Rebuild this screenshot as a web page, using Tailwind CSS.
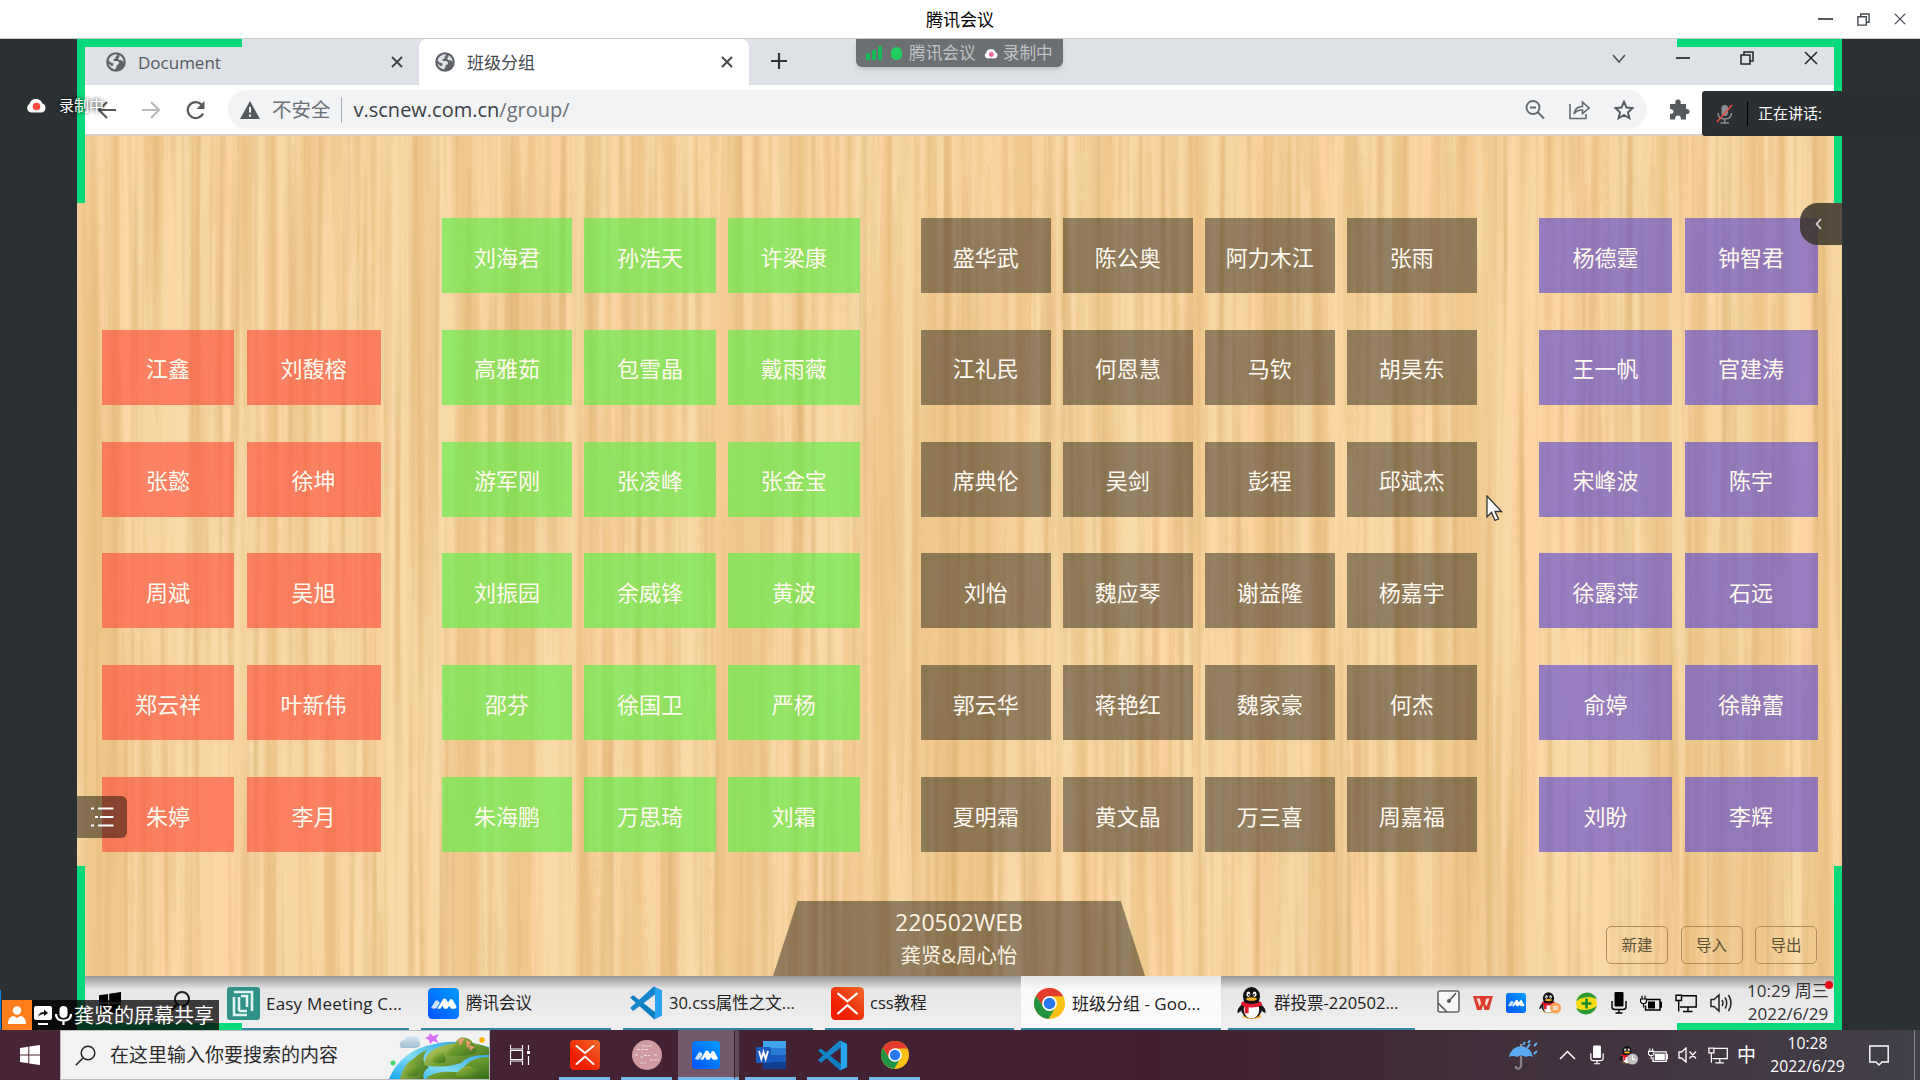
<!DOCTYPE html>
<html lang="zh-CN">
<head>
<meta charset="utf-8">
<title>腾讯会议</title>
<script src="https://cdn.jsdelivr.net/npm/@tailwindcss/browser@4"></script>
</head>
<body class="h-screen w-screen overflow-hidden bg-[#2b3033] font-['Open_Sans','Noto_Sans_CJK_SC',sans-serif] leading-none whitespace-nowrap text-[#222]">
<!-- shared icons -->
<svg class="absolute size-0">
  <defs>
    <linearGradient id="gBlue" x1="0" y1="1" x2="1" y2="0"><stop offset="0" stop-color="#0052ff"/><stop offset="1" stop-color="#009dff"/></linearGradient>
    <linearGradient id="gRed" x1="0" y1="1" x2="1" y2="0"><stop offset=".3" stop-color="#f01f00"/><stop offset="1" stop-color="#f0692b"/></linearGradient>
    <linearGradient id="gHill" x1="0" y1="0" x2="1" y2="1"><stop offset="0" stop-color="#b5bf4e"/><stop offset=".5" stop-color="#6c9a2c"/><stop offset="1" stop-color="#356d1c"/></linearGradient>
    <linearGradient id="gLand" x1="0" y1="0" x2="1" y2=".6"><stop offset="0" stop-color="#d3d873"/><stop offset=".5" stop-color="#7da53a"/><stop offset="1" stop-color="#4a7a22"/></linearGradient>
    <linearGradient id="gWater" x1="0" y1="1" x2="1" y2="0"><stop offset="0" stop-color="#18a5f0"/><stop offset=".4" stop-color="#7fdcf2"/><stop offset="1" stop-color="#1b9bea"/></linearGradient>
    <linearGradient id="gCloud" x1="0" y1="0" x2="0" y2="1"><stop offset="0" stop-color="#dbe8f0"/><stop offset="1" stop-color="#9dbdd2"/></linearGradient>
  </defs>
  <symbol id="globe" viewBox="0 0 20 20"><circle cx="10" cy="10" r="9.8" fill="#5f6368"/><path d="M2.6 8.4C3.4 5 6 2.7 9.4 2.3L11.5 3 9.6 4.8 9.8 6.2 7.6 7.3 7.8 9H11.6L13.2 10.6 12.4 12.4 10.6 13.2 10.4 15.6 8.8 17.4C5.8 16.8 3 14.4 2.5 11.6L5.6 14 7.4 13.6 7.2 11.2 4.6 10.6Z" fill="#dee1e6"/><path d="M13.6 3.2C16 4.5 17.6 7 17.6 10L15.4 8.2 13 8 12 6.2 13.4 5Z" fill="#dee1e6"/></symbol>
  <symbol id="x" viewBox="0 0 12 12"><path d="M1 1L11 11M11 1L1 11" fill="none" stroke="currentColor" stroke-width="1.9"/></symbol>
  <symbol id="xthin" viewBox="0 0 14 14"><path d="M1 1L13 13M13 1L1 13" fill="none" stroke="currentColor" stroke-width="1.5"/></symbol>
  <symbol id="restore" viewBox="0 0 14 14"><path d="M1 4H10V13H1ZM4 4V1H13V10H10" fill="none" stroke="currentColor" stroke-width="1.5"/></symbol>
  <symbol id="rec" viewBox="0 0 20 15"><path d="M5 14.5A4.6 4.6 0 0 1 3.4 6 6.8 6.8 0 0 1 16.4 5.6 4.6 4.6 0 0 1 15.4 14.5Z" fill="#fff"/></symbol>
  <symbol id="tm" viewBox="0 0 30 30"><rect width="30" height="30" rx="4" fill="url(#gBlue)"/><path d="M3 19L7 12.5Q8.5 11 10 12.5L11.5 14.5 8.5 19Q6 21 3 19Z" fill="#fff" opacity=".8"/><path d="M9 20L14.5 11Q16 9.5 17.5 11L19.5 14 21.5 11Q23 10 24 11.5L27.5 18Q28 20 26 20H22.5L20.5 17.5 18.5 20H15.5L14 17 12 20Z" fill="#fff"/></symbol>
  <symbol id="vs" viewBox="0 0 34 34"><path d="M1 11.5L4.2 9.2 26 26V33.5Q25 33.2 24 32.3Z" fill="#0a7fc4"/><path d="M1 22L24.2 1 26 .5V8.5L4.2 25Z" fill="#1686cc"/><path d="M25 .5L33 4.2V29.8L25 33.5Q26 32 26 30V4Q26 2 25 .5Z" fill="#25a4ef"/></symbol>
  <symbol id="xm" viewBox="0 0 30 30"><rect width="30" height="30" rx="4" fill="url(#gRed)"/><path d="M6.5 6L15 13 23.5 6M6.5 24L15 16.5 23.5 24" fill="none" stroke="#fff" stroke-width="2" stroke-linecap="round"/></symbol>
  <symbol id="chrome" viewBox="0 0 30 30"><circle cx="15" cy="15" r="15" fill="#fbc116"/><path d="M15 15V8H28.2A15 15 0 0 0 2 7.5L9 18.5Z" fill="#e33b2e"/><path d="M2 7.5A15 15 0 0 0 14 30L21 18.5 15 22 9 18.5Z" fill="#229342"/><circle cx="15" cy="15" r="7.2" fill="#fff"/><circle cx="15" cy="15" r="5.6" fill="#2a78f0"/></symbol>
  <symbol id="qq" viewBox="0 0 30 34"><path d="M6 31Q15 35 25 31L24 28H7Z" fill="#f5a81c"/><path d="M5 18Q0 22 .5 27L4 25ZM25 18Q30 22 29.5 27L26 25Z" fill="#111"/><ellipse cx="15" cy="22" rx="11" ry="10.5" fill="#111"/><ellipse cx="15" cy="23.5" rx="8" ry="9" fill="#fff"/><ellipse cx="15" cy="9.5" rx="8.8" ry="9.5" fill="#111"/><ellipse cx="11.8" cy="7.5" rx="2" ry="2.8" fill="#fff"/><ellipse cx="18.2" cy="7.5" rx="2" ry="2.8" fill="#fff"/><circle cx="12.3" cy="8" r="1" fill="#111"/><circle cx="17.7" cy="8" r="1" fill="#111"/><ellipse cx="15" cy="12.3" rx="5.5" ry="1.8" fill="#f7b21e"/><path d="M5 15Q15 20 25 15L26 19Q20 21.5 12 21V27H8V20L4 18.5Z" fill="#e5152a"/></symbol>
  <symbol id="mic" viewBox="0 0 16 22"><rect x="3.5" y="0" width="9" height="14.5" rx="1" fill="currentColor"/><path d="M1 9V15Q1 17.5 4 17.5H12Q15 17.5 15 15V9M8 18V21M4.5 21H11.5" fill="none" stroke="currentColor" stroke-width="1.4"/></symbol>
  <symbol id="bat" viewBox="0 0 22 16"><path d="M7 4H20V14.5H5.5V10M20 7H21.5V11.5H20" fill="none" stroke="currentColor" stroke-width="1.5"/><path d="M2 0V3M5 0V3M.5 3.5H6.5V6.5L5 8H2L.5 6.5ZM3.5 8V12" fill="none" stroke="currentColor" stroke-width="1.2"/></symbol>
  <symbol id="net" viewBox="0 0 22 18"><path d="M6.5 1.2H21.2V12.5H5M13 12.5V17M8 17H17.5M1 .8H6.5V6H1ZM3.7 6V17" fill="none" stroke="currentColor" stroke-width="1.4"/></symbol>
  <symbol id="win" viewBox="0 0 20 20"><path d="M0 3L8.3 1.8V9.5H0ZM9.3 1.6L20 0V9.5H9.3ZM0 10.5H8.3V18.2L0 17ZM9.3 10.5H20V20L9.3 18.4Z" fill="currentColor"/></symbol>
</svg>

<div class="flex h-full flex-col">
  <!-- window title bar -->
  <header class="relative flex h-[39px] shrink-0 items-center justify-end border-b border-[#c3cbcd] bg-white">
    <h1 class="absolute inset-x-0 top-[11px] text-center text-[17px] text-black">腾讯会议</h1>
    <div class="mr-[14px] flex items-center gap-[24px] text-[#444a50]">
      <span class="h-[1.5px] w-[15px] bg-[#555a5e]"></span>
      <svg class="size-[13px]"><use href="#restore"/></svg>
      <svg class="size-[12px]"><use href="#xthin"/></svg>
    </div>
  </header>

  <!-- shared screen -->
  <main class="relative flex h-[991px] shrink-0 pl-[77px]">
    <section class="flex w-[1765px] shrink-0 flex-col overflow-hidden">
      <!-- tab strip -->
      <div class="flex h-[46px] shrink-0 bg-[#dee1e6]">
        <div class="flex w-[342px] items-center pl-[29px]">
          <svg class="size-[20px]"><use href="#globe"/></svg>
          <span class="ml-[12px] text-[17px] text-[#55595e]">Document</span>
          <svg class="ml-auto mr-[16px] size-[12px] text-[#444]"><use href="#x"/></svg>
        </div>
        <div class="flex w-[330px] items-center rounded-t-lg bg-white pl-[16px]">
          <svg class="size-[20px]"><use href="#globe"/></svg>
          <span class="ml-[12px] text-[17px] text-[#45494d]">班级分组</span>
          <svg class="ml-auto mr-[16px] size-[12px] text-[#444]"><use href="#x"/></svg>
        </div>
        <svg class="ml-[21px] mt-[13px] size-[18px]" viewBox="0 0 18 18"><path d="M9 1V17M1 9H17" stroke="#333" stroke-width="2.2"/></svg>
        <div class="ml-auto mr-[24px] flex h-[38px] items-center gap-[50px] text-[#222]">
          <svg class="h-[9px] w-[14px]" viewBox="0 0 14 9"><path d="M1 1L7 8 13 1" fill="none" stroke="#555" stroke-width="1.7"/></svg>
          <span class="h-[2px] w-[14px] bg-[#444]"></span>
          <svg class="size-[14px]"><use href="#restore"/></svg>
          <svg class="size-[14px]"><use href="#xthin"/></svg>
        </div>
      </div>
      <!-- address bar -->
      <div class="flex h-[51px] shrink-0 items-center border-b-2 border-[#dccfc0] bg-white pl-[20px]">
        <svg class="h-[20px] w-[20px]" viewBox="0 0 20 20"><path d="M19 10H2M10 2L2 10 10 18" fill="none" stroke="#555a5e" stroke-width="2.2"/></svg>
        <svg class="ml-[24px] h-[20px] w-[20px]" viewBox="0 0 20 20"><path d="M1 10H18M10 2L18 10 10 18" fill="none" stroke="#b8babd" stroke-width="2.2"/></svg>
        <svg class="ml-[24px] h-[20px] w-[21px]" viewBox="0 0 21 20"><path d="M18 13.5A8 8 0 1 1 16.5 4.5" fill="none" stroke="#555a5e" stroke-width="2.3"/><path d="M19.5 1V9H11.5Z" fill="#555a5e"/></svg>
        <div class="ml-[22px] flex h-[39px] w-[1419px] items-center rounded-full bg-[#f1f3f4] pl-[12px]">
          <svg class="h-[18px] w-[20px]" viewBox="0 0 20 18"><path d="M10 0L20 18H0Z" fill="#55595e"/><path d="M10 6V11.5M10 13.5V15.8" stroke="#f1f3f4" stroke-width="2"/></svg>
          <span class="ml-[12px] text-[19.5px] text-[#6c7074]">不安全</span>
          <span class="ml-[10px] h-[26px] w-px bg-[#a9acb0]"></span>
          <span class="ml-[12px] text-[20px] text-[#3c4044]">v.scnew.com.cn<span class="text-[#6c7074]">/group/</span></span>
          <div class="ml-auto mr-[13px] flex items-center gap-[24px]">
            <svg class="h-[20px] w-[20px]" viewBox="0 0 20 20"><circle cx="8" cy="7.5" r="6.5" fill="none" stroke="#666a6e" stroke-width="1.9"/><path d="M5 7.5H11M12.5 12L19 18.5" stroke="#666a6e" stroke-width="2"/></svg>
            <svg class="h-[20px] w-[21px]" viewBox="0 0 21 20"><path d="M1 4V18.5H17V14M5 14Q6 6.5 13.5 6.500V2L20 8 13.500 13.500V10Q8 9.500 5 14Z" fill="none" stroke="#666a6e" stroke-width="1.6"/></svg>
            <svg class="h-[20px] w-[20px]" viewBox="0 0 20 20"><path d="M10 1.800L12.500 7.500 18.500 8 14 12.200 15.400 18.200 10 15 4.600 18.200 6 12.200 1.500 8 7.500 7.500Z" fill="none" stroke="#55595e" stroke-width="1.900"/></svg>
          </div>
        </div>
        <svg class="ml-[22px] h-[21px] w-[21px]" viewBox="0 0 21 21"><path d="M1 5H6.500Q5.500 .5 9 .5T11.500 5H17V10Q20.500 9.500 20.500 12.500T17 15V20.500H12Q12 16.500 9 16.500T6 20.500H1V15Q4.500 15 4.500 12.500T1 10Z" fill="#55595e"/></svg>
      </div>

      <!-- seating page -->
      <div class="relative h-[840px] shrink-0 overflow-hidden bg-[#f5d3a0]">
        <svg class="absolute inset-0 h-full w-full" preserveAspectRatio="none">
          <filter id="planks" x="0" y="0" width="100%" height="100%" color-interpolation-filters="sRGB"><feTurbulence type="fractalNoise" baseFrequency="0.045 0.0007" numOctaves="2" seed="8"/><feColorMatrix values="0 0 0 0 .91  0 0 0 0 .745  0 0 0 0 .49  2.500 0 0 0 -.75"/><feComponentTransfer><feFuncA type="discrete" tableValues="0 0 .08 .2 .12 .35 .45 .55 .65"/></feComponentTransfer></filter>
          <filter id="grain" x="0" y="0" width="100%" height="100%" color-interpolation-filters="sRGB"><feTurbulence type="fractalNoise" baseFrequency="0.12 0.002" numOctaves="2" seed="21"/><feColorMatrix values="0 0 0 0 .86  0 0 0 0 .69  0 0 0 0 .44  0 1.800 0 0 -.82"/></filter>
          <filter id="sheen" x="0" y="0" width="100%" height="100%" color-interpolation-filters="sRGB"><feTurbulence type="fractalNoise" baseFrequency="0.03 0.0015" numOctaves="2" seed="4"/><feColorMatrix values="0 0 0 0 1  0 0 0 0 .83  0 0 0 0 .64  0 0 2 0 -.85"/></filter>
          <rect width="100%" height="100%" fill="#f8d9a8"/>
          <rect width="100%" height="100%" filter="url(#sheen)"/>
          <rect width="100%" height="100%" filter="url(#planks)"/>
          <rect width="100%" height="100%" filter="url(#grain)"/>
        </svg>
        <div id="groups" class="relative flex h-[716px] items-end pl-[25px] text-[22px] text-[#fffaf0]"></div>
        <div class="relative flex h-[124px] items-end">
          <div class="ml-[696px] flex h-[75px] w-[372px] flex-col items-center bg-black/40 pt-[10px] text-[#fdf3e2] [clip-path:polygon(6.6%_0,93.500%_0,100%_100%,0_100%)]">
            <span class="text-[23px]">220502WEB</span>
            <span class="mt-[11px] text-[20.400px]">龚贤&amp;周心怡</span>
          </div>
          <div class="mb-[12px] ml-auto mr-[25px] flex gap-[12.500px] text-[15.500px] text-[#5f5038]">
            <span class="flex h-[38px] w-[62px] items-center justify-center rounded-[5px] border-[1.500px] border-[#b08c5c] pt-[2px]">新建</span>
            <span class="flex h-[38px] w-[62px] items-center justify-center rounded-[5px] border-[1.500px] border-[#b08c5c] pt-[2px]">导入</span>
            <span class="flex h-[38px] w-[62px] items-center justify-center rounded-[5px] border-[1.500px] border-[#b08c5c] pt-[2px]">导出</span>
          </div>
        </div>
      </div>

      <!-- presenter's taskbar -->
      <div class="flex h-[54px] shrink-0 bg-linear-to-b from-[#999] via-[#e6e6e6] via-25% to-[#f0f0f1] text-[16.500px] text-[#222]">
        <svg class="ml-[22px] mt-[16px] size-[22px] text-black"><use href="#win"/></svg>
        <svg class="ml-[50px] mt-[15px] size-[20px]" viewBox="0 0 20 20"><circle cx="11" cy="8" r="7" fill="none" stroke="#222" stroke-width="2"/><path d="M6 13L1 19" stroke="#222" stroke-width="2"/></svg>
        <div class="ml-[22px] flex w-[196px] items-center border-b-2 border-[#2f86a6] pl-[14px] pt-[2px]">
          <svg class="size-[33px]" viewBox="0 0 33 33"><rect width="33" height="33" rx="3" fill="#2f9187"/><path d="M7 5H25V24M20 28H7V10M12 24V10M12 24H20M14 9H20V20" fill="none" stroke="#dff3f0" stroke-width="2.600"/></svg>
          <span class="ml-[6px] text-[17px] tracking-[.2px]">Easy Meeting C...</span>
        </div>
        <div class="ml-[12px] flex w-[190px] items-center border-b-2 border-[#2f86a6] pl-[7px] pt-[2px]">
          <svg class="size-[31px]"><use href="#tm"/></svg><span class="ml-[7px]">腾讯会议</span>
        </div>
        <div class="ml-[12px] flex w-[190px] items-center border-b-2 border-[#2f86a6] pl-[6px] pt-[2px]">
          <svg class="size-[34px]"><use href="#vs"/></svg><span class="ml-[6px]">30.css属性之文...</span>
        </div>
        <div class="ml-[12px] flex w-[189px] items-center border-b-2 border-[#2f86a6] pl-[6px] pt-[2px]">
          <svg class="size-[33px]"><use href="#xm"/></svg><span class="ml-[6px]">css教程</span>
        </div>
        <div class="ml-[7px] flex w-[200px] items-center border-b-2 border-[#2f86a6] bg-white/75 pl-[13px] pt-[2px]">
          <svg class="size-[31px]"><use href="#chrome"/></svg><span class="ml-[7px] text-[17px]">班级分组 - Goo...</span>
        </div>
        <div class="ml-[7px] flex w-[187px] items-center border-b-2 border-[#2f86a6] pl-[9px] pt-[2px]">
          <svg class="h-[33px] w-[29px]"><use href="#qq"/></svg><span class="ml-[8px]">群投票-220502...</span>
        </div>
        <div class="ml-[22px] mt-[15px] flex h-[24px] w-[296px] shrink-0 items-center justify-between text-black">
          <svg class="mb-[4px] size-[23px]" viewBox="0 0 23 23"><rect x="1" y="1" width="21" height="21" rx="2" fill="#f8f8f8" stroke="#666" stroke-width="1.600"/><path d="M1 13L10 22M12 11L19 3" stroke="#555" stroke-width="1.600"/><circle cx="12" cy="11" r="2" fill="#555"/></svg>
          <svg class="h-[16px] w-[20px]" viewBox="0 0 20 16"><path d="M0 1H20L16 15H11.500L10 10 8.500 15H4Z" fill="#dc3b2c"/><path d="M3.500 3.500H7L8 9 6.500 11.500ZM16.500 3.500H13L12 9 13.500 11.500Z" fill="#f4dcd8"/></svg>
          <svg class="size-[20px]"><use href="#tm"/></svg>
          <svg class="h-[23px] w-[22px]" viewBox="0 0 22 23"><use href="#qq" width="19" height="22"/><circle cx="16.500" cy="16" r="5.500" fill="#f9a45a"/><path d="M14 14.800H19M14 17.200H19" stroke="#fff" stroke-width="1.200"/></svg>
          <svg class="size-[23px]" viewBox="0 0 23 23"><circle cx="11.500" cy="11.500" r="10.500" fill="#fbdc12"/><path d="M1 9Q4 1 12 .5 19 1 22 7 12 2 1 9ZM22 14Q19 22 11 22.500 4 22 1 16 11 21 22 14Z" fill="#2c9a38"/><path d="M11.500 6.500V16.500M6.500 11.500H16.500" stroke="#178a2c" stroke-width="2.600"/></svg>
          <svg class="h-[22px] w-[16px]"><use href="#mic"/></svg>
          <svg class="h-[17px] w-[22px]" viewBox="0 0 22 16"><use href="#bat"/><rect x="8" y="6" width="7" height="7"/></svg>
          <svg class="h-[19px] w-[22px]"><use href="#net"/></svg>
          <svg class="h-[20px] w-[23px]" viewBox="0 0 23 20"><path d="M1 6.500H4L9 2V18L4 13.500H1ZM12 7Q14 10 12 13M15 4.500Q18.500 10 15 15.500M18.500 2Q23.500 10 18.500 18" fill="none" stroke="#222" stroke-width="1.500"/></svg>
        </div>
        <div class="ml-[14px] flex w-[82px] shrink-0 flex-col items-center gap-[6px] pt-[6px] text-[17px] text-[#333]">
          <span>10:29 周三</span><span>2022/6/29</span>
        </div>
      </div>
    </section>

    <!-- share-border corners -->
    <div class="pointer-events-none absolute top-0 left-[77px] h-[164px] w-[8px] bg-[#08d97b]"></div>
    <div class="absolute top-0 left-[77px] h-[8px] w-[165px] bg-[#08d97b]"></div>
    <div class="absolute top-0 left-[1677px] h-[8px] w-[165px] bg-[#08d97b]"></div>
    <div class="absolute top-0 left-[1834px] h-[164px] w-[8px] bg-[#08d97b]"></div>
    <div class="absolute bottom-0 left-[77px] h-[164px] w-[8px] bg-[#08d97b]"></div>
    <div class="absolute bottom-0 left-[77px] h-[7px] w-[165px] bg-[#08d97b]"></div>
    <div class="absolute bottom-0 left-[1834px] h-[164px] w-[8px] bg-[#08d97b]"></div>
    <div class="absolute bottom-0 left-[1677px] h-[7px] w-[165px] bg-[#08d97b]"></div>
    <div class="absolute top-[942px] left-[1825px] size-[8px] rounded-full bg-[#e30b14]"></div>

    <!-- floating meeting status -->
    <div class="absolute top-0 left-[856px] flex h-[28px] w-[207px] items-center rounded-b-md bg-[#6c7072] pl-[10px] text-[16.700px] text-[#bfc1c2] shadow-md">
      <svg class="h-[14px] w-[16px]" viewBox="0 0 16 14"><path d="M0 7H4V14H0ZM6 4H10V14H6ZM12 0H16V14H12Z" fill="#18b858"/></svg>
      <span class="ml-[9px] h-[13px] w-[11px] rounded-full bg-[#1fce5c]"></span>
      <span class="ml-[7px]">腾讯会议</span>
      <svg class="ml-[8px] h-[11px] w-[14px]" viewBox="0 0 20 15"><use href="#rec"/><circle cx="10.500" cy="9" r="3.500" fill="#f0609a"/></svg>
      <span class="ml-[5px]">录制中</span>
    </div>

    <!-- recording label -->
    <div class="absolute top-[57px] left-[26px] flex h-[18px] items-center text-[15px] text-white [text-shadow:0_0_4px_#000]">
      <svg class="h-[15px] w-[20px]" viewBox="0 0 20 15"><use href="#rec"/><circle cx="10.500" cy="8.500" r="3.800" fill="#ff4a3d"/></svg>
      <span class="ml-[13px]">录制中</span>
    </div>

    <!-- speaking bar -->
    <div class="absolute top-[52px] left-[1702px] flex h-[45px] w-[218px] items-center rounded-l-[3px] bg-[#2b2f32] pl-[14px] text-[15px] text-white">
      <svg class="h-[20px] w-[17px]" viewBox="0 0 17 20"><rect x="5.500" y="1" width="6.500" height="11" rx="3.200" fill="#8b8f92"/><path d="M2 9Q2 15 8.700 15T15.500 9M8.700 15V19M4.500 19H13" fill="none" stroke="#8b8f92" stroke-width="1.500"/><path d="M1 18L16 1" stroke="#ee4a40" stroke-width="1.600"/></svg>
      <span class="ml-[14px] h-[25px] w-px bg-black"></span>
      <span class="ml-[10px]">正在讲话:</span>
    </div>

    <!-- edge handles -->
    <div class="absolute top-[164px] left-[1800px] flex h-[42px] w-[42px] items-center justify-center rounded-l-[18px] bg-[#3b342c]/85 pr-[5px]">
      <svg class="h-[12px] w-[7px]" viewBox="0 0 7 12"><path d="M6 1L1.500 6 6 11" fill="none" stroke="#ddd" stroke-width="1.600"/></svg>
    </div>
    <div class="absolute top-[757px] left-[77px] flex h-[42px] w-[50px] items-center rounded-r-md bg-black/45 pl-[14px]">
      <svg class="h-[20px] w-[23px]" viewBox="0 0 23 20"><path d="M7 1.500H22.500M9 10H22.500M7 18.500H22.500M0 1.500H3M4 10H7M0 18.500H3" stroke="#fff" stroke-width="2.200"/></svg>
    </div>

    <!-- sharing label -->
    <div class="absolute bottom-0 left-0 h-[40px] w-px bg-[#0a84e0]"></div>
    <div class="absolute bottom-0 left-[2px] flex h-[30px] w-[217px] items-center bg-black/75 text-[20px] text-white">
      <span class="flex h-full w-[30px] items-end justify-center bg-[#ff7e1b] pb-[6px]"><svg class="h-[18px] w-[18px]" viewBox="0 0 18 18"><circle cx="9" cy="4.500" r="4.200" fill="#fff"/><path d="M0 18Q0 10.500 6 10L9 12 12 10Q18 10.500 18 18Z" fill="#fff"/></svg></span>
      <svg class="ml-[2px] h-[19px] w-[18px]" viewBox="0 0 18 19"><rect y="0" width="18" height="14" rx="2" fill="#fff"/><path d="M4 11Q5 6 10 6V3.500L14 7 10 10V8Q6 8 4 11Z" fill="#111"/><path d="M4 18H14" stroke="#fff" stroke-width="2"/></svg>
      <svg class="ml-[3px] h-[19px] w-[17px]" viewBox="0 0 17 19"><rect x="4.500" y="0" width="8" height="12" rx="4" fill="#fff"/><path d="M1 8Q1 14.500 8.500 14.500T16 8M8.500 14.500V19" fill="none" stroke="#fff" stroke-width="2.200"/></svg>
      <span class="ml-[2px] pt-[2px]">龚贤的屏幕共享</span>
    </div>

    <!-- mouse pointer -->
    <svg class="absolute top-[456px] left-[1486px] h-[27px] w-[17px]" viewBox="0 0 17 27"><path d="M1 1V22L5.500 17.500 9 25.500 12.500 24 9 16.500H15.500Z" fill="#fff" stroke="#333" stroke-width="1.300"/></svg>
  </main>

  <!-- local taskbar -->
  <footer class="relative flex h-[50px] shrink-0 bg-linear-to-r from-[#482537] via-[#402031] via-60% to-[#42404a] text-white">
    <div class="flex w-[60px] items-center justify-center"><svg class="size-[20px]"><use href="#win"/></svg></div>
    <div class="flex w-[430px] items-center border border-[#bdbdbd] bg-[#f2f2f2] pl-[14px] text-[19px] text-[#2a2a2a]">
      <svg class="size-[21px]" viewBox="0 0 21 21"><circle cx="13" cy="8" r="6.800" fill="none" stroke="#222" stroke-width="1.500"/><path d="M8 13L.8 20.200" stroke="#222" stroke-width="1.600"/></svg>
      <span class="ml-[14px]">在这里输入你要搜索的内容</span>
      <svg class="ml-auto h-[48px] w-[102px]" viewBox="0 0 102 48">
        <path d="M2 48Q14 18 52 12 75 8 102 16V48Z" fill="url(#gWater)"/>
        <path d="M13 48Q16 34 26 28 34 21 40 19 32 30 42 36 34 42 37 48Z" fill="url(#gLand)"/>
        <path d="M37 34Q38 18 62 13 86 9 102 17V24Q82 23 74 32 56 38 37 34Z" fill="url(#gLand)"/>
        <path d="M40 46Q54 38 74 42 80 26 102 26V48H40Z" fill="url(#gHill)"/>
        <path d="M58 24Q64 22 70 9 74 4 82 8 88 12 90 21 80 27 58 24Z" fill="url(#gHill)"/>
        <path d="M71 8L78 7 73 15ZM79 9L84 11 80 18ZM82 14L88 16 83 20Z" fill="#e59a72"/>
        <path d="M44 30Q49 20 55 22 60 25 58 31 50 34 44 30Z" fill="url(#gHill)"/>
        <path d="M17 43Q22 32 29 34 34 38 30 44 22 47 17 43Z" fill="url(#gHill)"/>
        <path d="M68 46Q74 34 82 35 92 38 94 46Z" fill="url(#gHill)"/>
        <path d="M14 17Q10 11 17 9 20 3 26 6 33 4 32 10 36 15 29 17Z" fill="url(#gCloud)"/>
        <path d="M43 2L46 5 52 3 49 8 52 12 46 10 43 13 42 9 38 7 42 5Z" fill="#dc6ffa"/>
        <circle cx="95" cy="9" r="2.700" fill="#ffb000"/><circle cx="6" cy="32" r="2.500" fill="#43d46c"/>
      </svg>
    </div>
    <div class="flex w-[69px] items-center pl-[20px]"><svg class="h-[20px] w-[20px]" viewBox="0 0 20 20"><path d="M.5 0V4H12.500V0M.5 5.500V14.500H12.500V5.500ZM.5 20V16H12.500V20M18.500 0V5M18.500 11V20M1 5.500H12" fill="none" stroke="#fff" stroke-width="1.200"/><rect x="17" y="6" width="3" height="3" fill="#fff"/></svg></div>
    <div class="flex w-[51px] items-center justify-center border-b-[3px] border-[#76b9f0] pt-[3px]"><svg class="size-[30px]"><use href="#xm"/></svg></div>
    <div class="ml-[11px] flex w-[51px] items-center justify-center border-b-[3px] border-[#76b9f0] pt-[3px]"><svg class="size-[30px]" viewBox="0 0 30 30"><circle cx="15" cy="15" r="15" fill="#cf9ba3"/><path d="M10 6H20M5 9.500H17M3 15H6M8 17H11M12 15.500H18M22 15H26M18 20H27M8 23H14" stroke="#eedadd" stroke-width="1" stroke-dasharray="3 1"/></svg></div>
    <div class="ml-[6px] flex w-[56px] items-center justify-center border-b-[3px] border-[#76b9f0] bg-[#73576a] pt-[3px]"><svg class="size-[28px]"><use href="#tm"/></svg></div>
    <div class="w-[5px] border-b-[3px] border-l border-[#6eaadc] border-l-[#3a2230] bg-[#604858]"></div>
    <div class="ml-[6px] flex w-[51px] items-center justify-center border-b-[3px] border-[#76b9f0] pt-[3px]"><svg class="h-[28px] w-[30px]" viewBox="0 0 30 28"><path d="M7 0H30V7H7Z" fill="#41a5ee"/><path d="M7 7H30V14H7Z" fill="#2b7cd3"/><path d="M7 14H30V21H7Z" fill="#185abd"/><path d="M7 21H30V28H7Z" fill="#103f91"/><rect y="6" width="15" height="16" rx="1.500" fill="#185abd"/><path d="M3 10L5.300 18 7.500 11 9.700 18 12 10" fill="none" stroke="#fff" stroke-width="1.900"/></svg></div>
    <div class="ml-[11px] flex w-[51px] items-center justify-center border-b-[3px] border-[#76b9f0] pt-[3px]"><svg class="size-[31px]"><use href="#vs"/></svg></div>
    <div class="ml-[11px] flex w-[51px] items-center justify-center border-b-[3px] border-[#76b9f0] pt-[3px]"><svg class="size-[28px]"><use href="#chrome"/></svg></div>
    <div class="ml-auto mr-[31px] flex items-center">
      <svg class="h-[31px] w-[30px]" viewBox="0 0 30 31"><path d="M1 17Q3 7 13 6 23 7 25 17 21 15 18 17 13 14 9 17 5 15 1 17Z" fill="#5aa9f2"/><path d="M13 4V7" stroke="#aaa" stroke-width="1.500"/><path d="M13 16V26Q12 30 8 28V26" fill="none" stroke="#8c8084" stroke-width="2.200"/><path d="M15 5L17 2M20 3L22 .5M19 8L22 4M26 6L29 3M26 14L29 11" stroke="#62b4f5" stroke-width="2"/></svg>
      <svg class="ml-[21px] h-[10px] w-[17px]" viewBox="0 0 17 10"><path d="M1 9L8.500 1.500 16 9" fill="none" stroke="#fff" stroke-width="1.500"/></svg>
      <svg class="ml-[14px] h-[20px] w-[14px]"><use href="#mic"/></svg>
      <svg class="ml-[15px] h-[20px] w-[20px]" viewBox="0 0 20 20"><use href="#qq" width="16" height="20"/><circle cx="13.500" cy="14" r="5.500" fill="#bfc0c2"/><path d="M13.500 10.500V14.500H16.500" fill="none" stroke="#fff" stroke-width="1.200"/></svg>
      <svg class="ml-[9px] h-[15px] w-[20px]" viewBox="0 0 22 16"><use href="#bat"/><rect x="7.500" y="6" width="11" height="7" fill="#fff"/></svg>
      <svg class="ml-[10px] h-[16px] w-[19px]" viewBox="0 0 19 16"><path d="M1 5H3.500L8 1V15L3.500 11H1ZM11.500 4.500L18 11.500M18 4.500L11.500 11.500" fill="none" stroke="#fff" stroke-width="1.300"/></svg>
      <svg class="ml-[11px] h-[17px] w-[20px]"><use href="#net"/></svg>
      <span class="ml-[9px] text-[19px]">中</span>
      <div class="ml-[14px] flex w-[75px] flex-col items-center gap-[7px] text-[15.700px]"><span>10:28</span><span>2022/6/29</span></div>
      <svg class="ml-[24px] h-[21px] w-[20px]" viewBox="0 0 20 21"><path d="M.8 1H19.200V17H13L10 20 7 17H.8Z" fill="none" stroke="#fff" stroke-width="1.400"/></svg>
    </div>
    <span class="absolute right-[5px] bottom-0 h-[50px] w-px bg-[#8b878f]"></span>
  </footer>
</div>

<script>
  const groups = [
    { box: 'grid grid-cols-[132px_134px] w-[278.500px] gap-x-[12.500px] gap-y-[36.800px]', cell: 'flex h-[75px] items-center justify-center bg-[rgb(253_72_55/.6)] pt-[2px]',
      names: '江鑫 刘馥榕 张懿 徐坤 周斌 吴旭 郑云祥 叶新伟 朱婷 李月' },
    { box: 'ml-[61.500px] grid grid-cols-[130px_131.500px_131.500px] w-[417.500px] gap-x-[12.300px] gap-y-[36.800px]', cell: 'flex h-[75px] items-center justify-center bg-[rgb(83_240_63/.6)] pt-[2px]',
      names: '刘海君 孙浩天 许梁康 高雅茹 包雪晶 戴雨薇 游军刚 张凌峰 张金宝 刘振园 余威锋 黄波 邵芬 徐国卫 严杨 朱海鹏 万思琦 刘霜' },
    { box: 'ml-[61.500px] grid grid-cols-4 w-[555.500px] gap-x-[12.500px] gap-y-[36.800px]', cell: 'flex h-[75px] items-center justify-center bg-black/40 pt-[2px]',
      names: '盛华武 陈公奥 阿力木江 张雨 江礼民 何恩慧 马钦 胡昊东 席典伦 吴剑 彭程 邱斌杰 刘怡 魏应琴 谢益隆 杨嘉宇 郭云华 蒋艳红 魏家豪 何杰 夏明霜 黄文晶 万三喜 周嘉福' },
    { box: 'ml-[62.500px] grid grid-cols-2 w-[278.500px] gap-x-[12.500px] gap-y-[36.800px]', cell: 'flex h-[75px] items-center justify-center bg-[rgb(86_67_210/.6)] pt-[2px]',
      names: '杨德霆 钟智君 王一帆 官建涛 宋峰波 陈宇 徐露萍 石远 俞婷 徐静蕾 刘盼 李辉' }
  ];
  document.getElementById('groups').innerHTML = groups.map(g =>
    `<div class="${g.box}">` + g.names.split(' ').map(n => `<div class="${g.cell}">${n}</div>`).join('') + '</div>').join('');
</script>
</body>
</html>
